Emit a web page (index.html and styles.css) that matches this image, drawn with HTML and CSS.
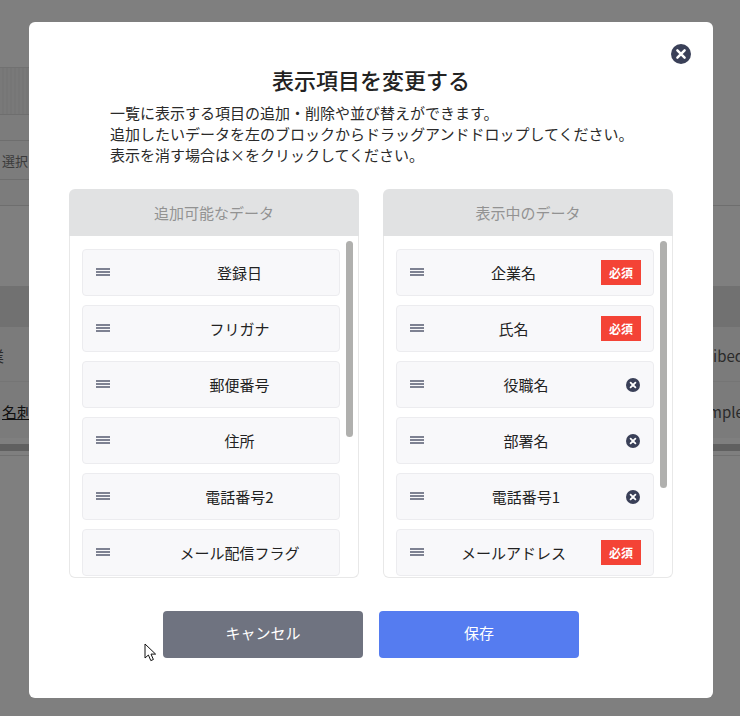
FILE: index.html
```html
<!DOCTYPE html>
<html lang="ja">
<head>
<meta charset="utf-8">
<title>表示項目を変更する</title>
<link rel="stylesheet" href="styles.css">
</head>
<body>
<div class="page">
  <div class="page-top"></div>
  <div class="filter-head"></div>
  <div class="filter-row short"></div>
  <div class="filter-row tall"><span>選択</span></div>
  <div class="filter-row last"></div>
  <div class="full-line"></div>
  <div class="page-gap"></div>
  <div class="table-head"></div>
  <div class="table-row first"><span class="cell-left clipped">業</span><span class="cell-right">ibed</span></div>
  <div class="table-row second"><span class="cell-left"><u>名刺</u></span><span class="cell-right shifted">mple</span></div>
  <div class="table-scroll"></div>
  <div class="table-foot"></div>
</div>
<div class="overlay"></div>
<main class="modal">
  <button class="modal-close" aria-label="閉じる">
    <svg viewBox="0 0 20 20" width="20" height="20"><circle cx="10" cy="10" r="10" fill="#3a4058"/><path d="M6.4 6.4l7.2 7.2M13.6 6.4l-7.2 7.2" stroke="#fff" stroke-width="2.5" stroke-linecap="round"/></svg>
  </button>
  <h1 class="modal-title">表示項目を変更する</h1>
  <p class="modal-text">一覧に表示する項目の追加・削除や並び替えができます。<br>追加したいデータを左のブロックからドラッグアンドドロップしてください。<br>表示を消す場合は×をクリックしてください。</p>
  <div class="panels">
    <section class="panel">
      <h2 class="panel-head">追加可能なデータ</h2>
      <div class="panel-body">
        <div class="scrollbar short-bar"></div>
        <div class="item available"><svg class="grip" viewBox="0 0 14 8" width="14" height="8"><path d="M0 1h14M0 4h14M0 7h14" stroke="#555b70" stroke-width="1.3"/></svg><span class="label">登録日</span></div>
        <div class="item available"><svg class="grip" viewBox="0 0 14 8" width="14" height="8"><path d="M0 1h14M0 4h14M0 7h14" stroke="#555b70" stroke-width="1.3"/></svg><span class="label">フリガナ</span></div>
        <div class="item available"><svg class="grip" viewBox="0 0 14 8" width="14" height="8"><path d="M0 1h14M0 4h14M0 7h14" stroke="#555b70" stroke-width="1.3"/></svg><span class="label">郵便番号</span></div>
        <div class="item available"><svg class="grip" viewBox="0 0 14 8" width="14" height="8"><path d="M0 1h14M0 4h14M0 7h14" stroke="#555b70" stroke-width="1.3"/></svg><span class="label">住所</span></div>
        <div class="item available"><svg class="grip" viewBox="0 0 14 8" width="14" height="8"><path d="M0 1h14M0 4h14M0 7h14" stroke="#555b70" stroke-width="1.3"/></svg><span class="label">電話番号2</span></div>
        <div class="item available"><svg class="grip" viewBox="0 0 14 8" width="14" height="8"><path d="M0 1h14M0 4h14M0 7h14" stroke="#555b70" stroke-width="1.3"/></svg><span class="label">メール配信フラグ</span></div>
      </div>
    </section>
    <section class="panel">
      <h2 class="panel-head">表示中のデータ</h2>
      <div class="panel-body">
        <div class="scrollbar long-bar"></div>
        <div class="item"><svg class="grip" viewBox="0 0 14 8" width="14" height="8"><path d="M0 1h14M0 4h14M0 7h14" stroke="#555b70" stroke-width="1.3"/></svg><span class="label">企業名</span><span class="badge">必須</span></div>
        <div class="item"><svg class="grip" viewBox="0 0 14 8" width="14" height="8"><path d="M0 1h14M0 4h14M0 7h14" stroke="#555b70" stroke-width="1.3"/></svg><span class="label">氏名</span><span class="badge">必須</span></div>
        <div class="item"><svg class="grip" viewBox="0 0 14 8" width="14" height="8"><path d="M0 1h14M0 4h14M0 7h14" stroke="#555b70" stroke-width="1.3"/></svg><span class="label">役職名</span><svg class="remove" viewBox="0 0 14 14" width="14" height="14"><circle cx="7" cy="7" r="7" fill="#3a4058"/><path d="M4.6 4.6l4.8 4.8M9.4 4.6l-4.8 4.8" stroke="#fff" stroke-width="1.8" stroke-linecap="round"/></svg></div>
        <div class="item"><svg class="grip" viewBox="0 0 14 8" width="14" height="8"><path d="M0 1h14M0 4h14M0 7h14" stroke="#555b70" stroke-width="1.3"/></svg><span class="label">部署名</span><svg class="remove" viewBox="0 0 14 14" width="14" height="14"><circle cx="7" cy="7" r="7" fill="#3a4058"/><path d="M4.6 4.6l4.8 4.8M9.4 4.6l-4.8 4.8" stroke="#fff" stroke-width="1.8" stroke-linecap="round"/></svg></div>
        <div class="item"><svg class="grip" viewBox="0 0 14 8" width="14" height="8"><path d="M0 1h14M0 4h14M0 7h14" stroke="#555b70" stroke-width="1.3"/></svg><span class="label">電話番号1</span><svg class="remove" viewBox="0 0 14 14" width="14" height="14"><circle cx="7" cy="7" r="7" fill="#3a4058"/><path d="M4.6 4.6l4.8 4.8M9.4 4.6l-4.8 4.8" stroke="#fff" stroke-width="1.8" stroke-linecap="round"/></svg></div>
        <div class="item"><svg class="grip" viewBox="0 0 14 8" width="14" height="8"><path d="M0 1h14M0 4h14M0 7h14" stroke="#555b70" stroke-width="1.3"/></svg><span class="label">メールアドレス</span><span class="badge">必須</span></div>
      </div>
    </section>
  </div>
  <div class="actions">
    <button class="btn btn-cancel">キャンセル</button>
    <button class="btn btn-save">保存</button>
  </div>
</main>
<svg class="cursor" viewBox="0 0 14 20" width="14" height="20"><path d="M1 1v14l3.4-3 2.4 5.6 2.6-1.1-2.4-5.4h4.6z" fill="#fff" stroke="#111" stroke-width="1"/></svg>
</body>
</html>
```
FILE: styles.css
```css
* { box-sizing: border-box; }
html, body { margin: 0; padding: 0; }
body {
  width: 740px;
  height: 716px;
  overflow: hidden;
  position: relative;
  background: #fff;
  color: #333;
  font-family: "Noto Sans CJK JP", "Noto Sans", sans-serif;
}

/* page behind the dialog */
.page { height: 716px; overflow: hidden; }
.page-top { height: 67px; }
.filter-head {
  width: 120px;
  height: 48px;
  background: repeating-linear-gradient(90deg, #f2f2f2 0 2px, #ececec 2px 4px);
  border-top: 1px solid #e2e2e2;
  border-bottom: 1px solid #dcdcdc;
}
.filter-row { width: 120px; border-bottom: 1px solid #dcdcdc; background: #f8f8f8; }
.filter-row.short { height: 26px; }
.filter-row.tall { height: 39px; padding-left: 2px; font-size: 13px; line-height: 40px; color: #777; }
.filter-row.last { height: 25px; border-bottom: 0; }
.full-line { height: 1px; background: #dcdcdc; }
.page-gap { height: 80px; }
.table-head { height: 41px; background: #e2e2e2; }
.table-row {
  display: flex;
  justify-content: space-between;
  background: #f7f7f7;
  font-size: 15px;
  white-space: nowrap;
  overflow: hidden;
}
.table-row.first { height: 55px; line-height: 57px; border-bottom: 1px solid #ebebeb; }
.table-row.second { height: 56px; line-height: 60px; }
.cell-left { padding-left: 2px; color: #222; }
.cell-left.clipped { margin-left: -13px; color: #555; }
.cell-right { width: 27px; flex: none; color: #555; }
.cell-right.shifted { text-indent: -5px; }
.table-scroll { height: 7px; margin-top: 6px; background: #c0c0c0; }
.table-foot { height: 5px; border-bottom: 1px solid #e2e2e2; }

.overlay { position: absolute; inset: 0; background: rgba(0, 0, 0, .5); }

/* dialog */
.modal {
  position: absolute;
  left: 29px;
  top: 22px;
  width: 684px;
  height: 676px;
  padding: 41px 40px 0;
  background: #fff;
  border-radius: 6px;
}
.modal-close {
  position: absolute;
  top: 22px;
  right: 22px;
  width: 20px;
  height: 20px;
  padding: 0;
  border: 0;
  background: none;
  line-height: 0;
}
.modal-title {
  margin: 0;
  font-size: 22px;
  font-weight: 500;
  line-height: 32px;
  text-align: center;
  color: #222;
}
.modal-text {
  margin: 7px 0 0 41px;
  font-size: 15px;
  line-height: 21px;
  color: #2a2a2a;
}
.panels { display: flex; gap: 24px; margin-top: 24px; }
.panel { width: 290px; height: 389px; display: flex; flex-direction: column; }
.panel-head {
  flex: none;
  margin: 0;
  height: 47px;
  background: #e1e2e3;
  border-radius: 6px 6px 0 0;
  font-size: 15px;
  font-weight: 400;
  line-height: 48px;
  text-align: center;
  color: #929292;
}
.panel-body {
  flex: 1;
  min-height: 0;
  position: relative;
  overflow: hidden;
  display: flex;
  flex-direction: column;
  gap: 9px;
  padding: 13px 18px 0 12px;
  border: 1px solid #e8e8e8;
  border-top: 0;
  border-radius: 0 0 6px 6px;
}
.scrollbar {
  position: absolute;
  top: 5px;
  right: 5px;
  width: 7px;
  background: #b0b0ae;
  border-radius: 4px;
}
.short-bar { height: 196px; }
.long-bar { height: 247px; }
.item {
  flex: none;
  display: flex;
  align-items: center;
  height: 47px;
  padding: 0 12px 0 13px;
  background: #f8f8fa;
  border: 1px solid #ececef;
  border-radius: 4px;
  font-size: 15px;
  color: #222;
}
.grip { flex: none; margin-top: -1px; }
.label { flex: 1; padding-left: 2px; text-align: center; line-height: 22px; margin-top: 1px; }
.available { padding-right: 0; }
.available .label { padding-left: 30px; }
.badge {
  flex: none;
  width: 40px;
  height: 25px;
  background: #f44336;
  color: #fff;
  font-size: 12px;
  font-weight: 700;
  line-height: 26px;
  text-align: center;
}
.remove { flex: none; margin-right: 1px; }

.actions { display: flex; justify-content: center; gap: 16px; margin-top: 33px; }
.btn {
  width: 200px;
  height: 47px;
  border: 0;
  border-radius: 4px;
  color: #fff;
  font-family: inherit;
  font-size: 15px;
  line-height: 22px;
  padding: 0 0 4px;
}
.btn-cancel { background: #6f7380; }
.btn-save { background: #557cf0; }

.cursor { position: absolute; left: 144px; top: 643px; }
```
